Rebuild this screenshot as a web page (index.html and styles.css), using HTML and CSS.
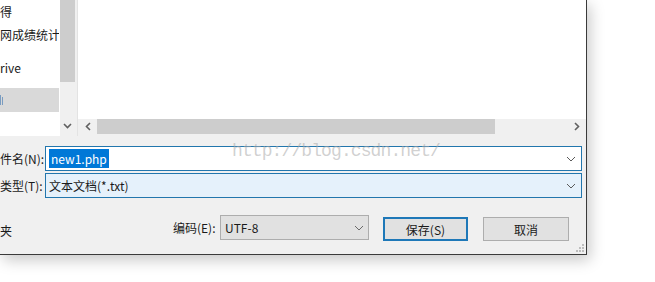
FILE: index.html
```html
<!DOCTYPE html>
<html lang="zh-CN">
<head>
    <meta charset="UTF-8">
    <meta name="viewport" content="width=device-width, initial-scale=1.0">
    <title>另存为</title>
    <link rel="stylesheet" href="styles.css">
</head>
<body>
    <div class="dialog">
        <div class="browser">
            <div class="nav">
                <ul class="nav-list">
                    <li class="nav-item">得</li>
                    <li class="nav-item">网成绩统计</li>
                    <li class="nav-item nav-gap">rive</li>
                    <li class="nav-item nav-gap selected">
                        <svg class="nav-icon" width="4" height="10" viewBox="0 0 4 10">
                            <rect x="0" y="0" width="1" height="10" fill="#7a9cc0"/>
                            <rect x="2" y="2" width="1" height="8" fill="#7a9cc0"/>
                        </svg>
                    </li>
                </ul>
                <div class="vscroll">
                    <div class="vthumb"></div>
                    <svg class="arrow arrow-down" width="9" height="6" viewBox="0 0 9 6">
                        <polyline points="1,1 4.5,4.5 8,1" fill="none" stroke="#606060" stroke-width="1.6"/>
                    </svg>
                </div>
            </div>
            <div class="splitter"></div>
            <div class="files">
                <div class="file-area"></div>
                <div class="hscroll">
                    <div class="hbtn hbtn-left">
                        <svg width="6" height="9" viewBox="0 0 6 9">
                            <polyline points="5,1 1.5,4.5 5,8" fill="none" stroke="#606060" stroke-width="1.6"/>
                        </svg>
                    </div>
                    <div class="htrack"><div class="hthumb"></div></div>
                    <div class="hbtn hbtn-right">
                        <svg width="6" height="9" viewBox="0 0 6 9">
                            <polyline points="1,1 4.5,4.5 1,8" fill="none" stroke="#606060" stroke-width="1.6"/>
                        </svg>
                    </div>
                </div>
            </div>
        </div>

        <div class="fields">
            <label class="field-label">件名(N):</label>
            <div class="combo combo-name">
                <span class="combo-text"><span class="selection">new1.php</span></span>
                <svg class="chevron" width="10" height="6" viewBox="0 0 10 6">
                    <polyline points="1,1 5,5 9,1" fill="none" stroke="#5a5a5a" stroke-width="1"/>
                </svg>
            </div>
            <label class="field-label">类型(T):</label>
            <div class="combo combo-type">
                <span class="combo-text">文本文档(*.txt)</span>
                <svg class="chevron" width="10" height="6" viewBox="0 0 10 6">
                    <polyline points="1,1 5,5 9,1" fill="none" stroke="#5a5a5a" stroke-width="1"/>
                </svg>
            </div>
        </div>

        <div class="actions">
            <span class="folder-toggle">夹</span>
            <span class="enc-label">编码(E):</span>
            <div class="select">
                <span class="combo-text">UTF-8</span>
                <svg class="chevron" width="10" height="6" viewBox="0 0 10 6">
                    <polyline points="1,1 5,5 9,1" fill="none" stroke="#6a6a6a" stroke-width="1"/>
                </svg>
            </div>
            <button class="btn btn-default" type="button">保存(S)</button>
            <button class="btn" type="button">取消</button>
        </div>

        <svg class="grip" width="8" height="8" viewBox="0 0 8 8">
            <rect x="6" y="0" width="2" height="2" fill="#bdbdbd"/>
            <rect x="3" y="3" width="2" height="2" fill="#bdbdbd"/>
            <rect x="6" y="3" width="2" height="2" fill="#bdbdbd"/>
            <rect x="0" y="6" width="2" height="2" fill="#bdbdbd"/>
            <rect x="3" y="6" width="2" height="2" fill="#bdbdbd"/>
            <rect x="6" y="6" width="2" height="2" fill="#bdbdbd"/>
        </svg>
    </div>
    <div class="watermark">http://blog.csdn.net/</div>
</body>
</html>
```

FILE: styles.css
```css
/* General Reset */
* {
    margin: 0;
    padding: 0;
    box-sizing: border-box;
    font-family: 'Noto Sans CJK SC', 'Noto Sans', sans-serif;
}

body {
    background: #fff;
    color: #1a1a1a;
    width: 655px;
    height: 282px;
    overflow: hidden;
    position: relative;
    font-size: 12px;
}

.dialog {
    position: relative;
    width: 587px;
    height: 255px;
    background: #f0f0f0;
    border-right: 1px solid #3a3a3a;
    border-bottom: 1px solid #3a3a3a;
    box-shadow: 3px 5px 14px rgba(0, 0, 0, 0.22);
}

/* folder browser */
.browser {
    display: flex;
    height: 136px;
}

.nav {
    display: flex;
    width: 75px;
}

.nav-list {
    list-style: none;
    width: 60px;
    background: #fff;
    padding-top: 0;
}

.nav-item {
    height: 23px;
    line-height: 23px;
    white-space: nowrap;
    overflow: hidden;
    width: 59px;
}

.nav-item + .nav-item {
    height: 24px;
    line-height: 24px;
}

.nav-gap {
    margin-top: 9px;
}

.nav-item.selected {
    margin-top: 8px;
    background: #d9d9d9;
    display: flex;
    align-items: center;
}

.vscroll {
    width: 15px;
    background: #f0f0f0;
    display: flex;
    flex-direction: column;
    align-items: center;
}

.vthumb {
    width: 15px;
    height: 82px;
    background: #cdcdcd;
}

.arrow-down {
    margin-top: 41px;
}

.splitter {
    width: 3px;
    background: #f0f0f0;
    border-right: 1px solid #e3e3e3;
}

.files {
    flex: 1;
    display: flex;
    flex-direction: column;
}

.file-area {
    flex: 1;
    background: #fff;
}

.hscroll {
    height: 17px;
    display: flex;
    background: #f0f0f0;
}

.hbtn {
    height: 15px;
    display: flex;
    align-items: center;
    justify-content: center;
}

.hbtn-left {
    width: 19px;
}

.hbtn-right {
    width: 18px;
}

.htrack {
    flex: 1;
}

.hthumb {
    width: 398px;
    height: 15px;
    background: #cdcdcd;
}

/* name and type */
.fields {
    display: grid;
    grid-template-columns: 45px 537px;
    grid-auto-rows: 25px;
    row-gap: 2px;
    margin-top: 10px;
}

.field-label {
    text-align: right;
    padding-right: 4px;
    line-height: 25px;
    white-space: nowrap;
    overflow: hidden;
}

.combo {
    display: flex;
    align-items: center;
    border: 1px solid #2276ad;
    padding: 0 5px 0 3px;
}

.combo-name {
    background: #fff;
}

.combo-type {
    background: #e5f1fb;
}

.combo-text {
    flex: 1;
    white-space: nowrap;
}

.selection {
    background: #0078d7;
    color: #fff;
    padding: 1px 2px;
    line-height: 18px;
}

/* bottom row */
.actions {
    display: flex;
    align-items: flex-start;
    margin-top: 17px;
    height: 26px;
}

.folder-toggle {
    width: 173px;
    line-height: 32px;
}

.enc-label {
    width: 47px;
    line-height: 25px;
}

.select {
    width: 149px;
    height: 25px;
    display: flex;
    align-items: center;
    background: #e1e1e1;
    border: 1px solid #adadad;
    padding: 0 4px 0 4px;
}

.btn {
    width: 86px;
    height: 24px;
    margin-top: 2px;
    margin-left: 14px;
    background: #e1e1e1;
    border: 1px solid #adadad;
    font-size: 12px;
    color: #1a1a1a;
}

.btn-default {
    width: 85px;
    border: 2px solid #1e78b8;
}

.btn + .btn {
    margin-left: 15px;
}

.grip {
    position: absolute;
    right: 2px;
    bottom: 2px;
}

.watermark {
    position: absolute;
    left: 232px;
    top: 141px;
    font-family: 'Liberation Mono', monospace;
    font-size: 18px;
    letter-spacing: -0.9px;
    color: rgba(170, 170, 170, 0.55);
    pointer-events: none;
}
```
